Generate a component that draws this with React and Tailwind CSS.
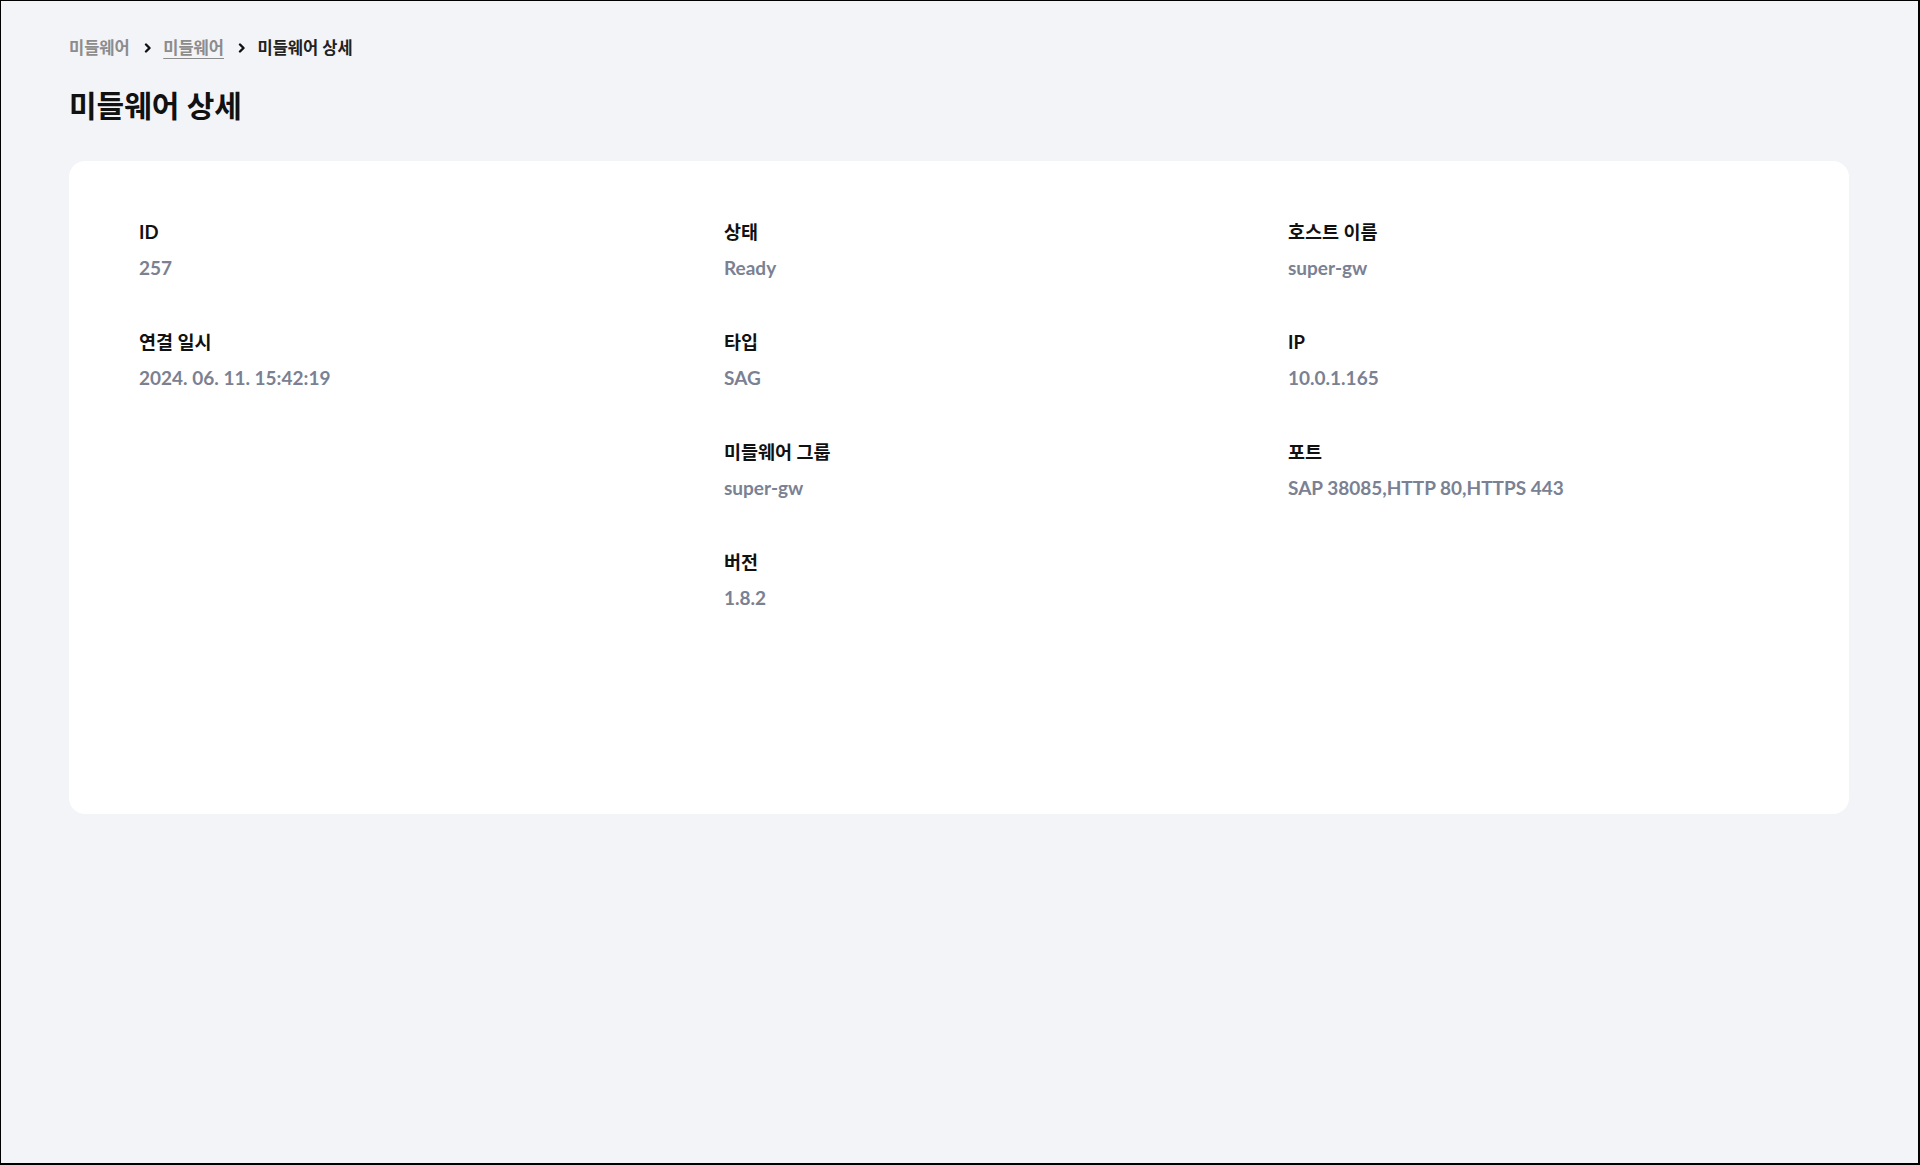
const details = [
  [
    { label: "ID", value: "257" },
    { label: "연결 일시", value: "2024. 06. 11. 15:42:19" },
  ],
  [
    { label: "상태", value: "Ready" },
    { label: "타입", value: "SAG" },
    { label: "미들웨어 그룹", value: "super-gw" },
    { label: "버전", value: "1.8.2" },
  ],
  [
    { label: "호스트 이름", value: "super-gw" },
    { label: "IP", value: "10.0.1.165" },
    { label: "포트", value: "SAP 38085,HTTP 80,HTTPS 443" },
  ],
];

function Chevron() {
  return (
    <svg width="8" height="10" viewBox="0 0 8 10" className="ml-[14.5px] mr-[11px] text-[#111]">
      <path d="M2 1.5 5.5 5 2 8.5" fill="none" stroke="currentColor" strokeWidth="2.4" strokeLinecap="round" strokeLinejoin="round" />
    </svg>
  );
}

function Field({ label, value }) {
  return (
    <div className="flex flex-col">
      <span className="text-[18.5px] leading-[24px] font-bold text-[#111]">{label}</span>
      <span className="mt-[12px] text-[19px] leading-[24px] font-bold text-[#7a8193]">{value}</span>
    </div>
  );
}

export default function App() {
  return (
    <div
      className="h-[1165px] w-[1920px] bg-[#f3f4f8] border-l border-t border-r-2 border-b-2 border-black pl-[68px] pr-[69px] pt-[37px]"
      style={{ fontFamily: 'Lato, "Noto Sans CJK KR", sans-serif' }}
    >
      {/* Breadcrumb */}
      <nav className="flex items-center text-[16.5px] leading-[20px] font-semibold">
        <span className="text-[#8c8c8c]">미들웨어</span>
        <Chevron />
        <a href="#" className="text-[#8c8c8c] underline underline-offset-4">미들웨어</a>
        <Chevron />
        <span className="text-[#222] font-bold">미들웨어 상세</span>
      </nav>

      {/* Heading */}
      <h1 className="mt-[29px] text-[30px] leading-[36px] font-bold text-[#111]">미들웨어 상세</h1>

      {/* Detail card */}
      <div className="mt-[38px] h-[653px] rounded-2xl bg-white pl-[70px] pt-[59px]">
        <div className="grid grid-cols-[585px_564px_1fr]">
          {details.map((col, i) => (
            <div key={i} className="flex flex-col gap-[50px]">
              {col.map((f) => (
                <Field key={f.label} {...f} />
              ))}
            </div>
          ))}
        </div>
      </div>
    </div>
  );
}
